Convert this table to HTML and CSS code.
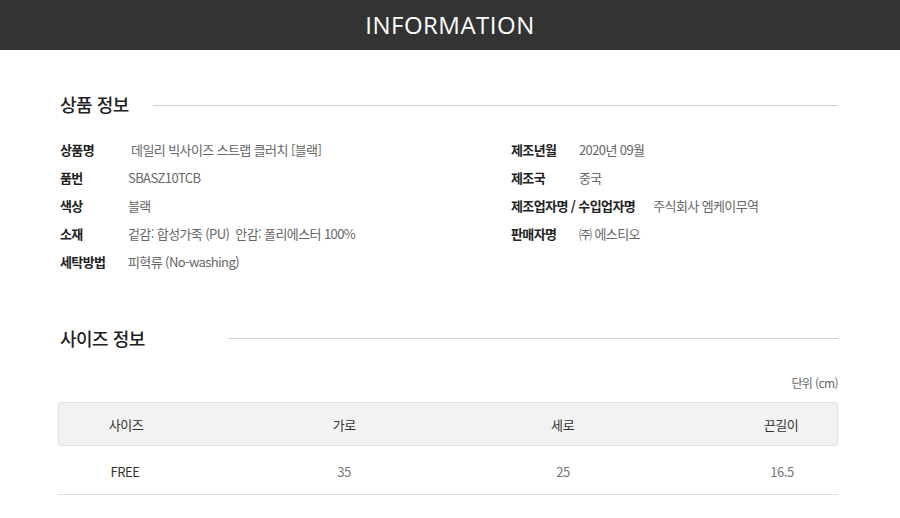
FILE: index.html
```html
<!DOCTYPE html>
<html lang="ko">
<head>
<meta charset="utf-8">
<title>INFORMATION</title>
<link rel="stylesheet" href="styles.css">
</head>
<body>
<header class="top-bar"><h1 class="top-title">INFORMATION</h1></header>
<main class="content">
  <section class="section">
    <div class="section-head">
      <h2 class="section-title">상품 정보</h2>
      <span class="section-line line-product"></span>
    </div>
    <div class="info-grid">
      <dl class="info-col">
        <div class="info-row"><dt class="info-label">상품명</dt><dd class="info-value">&nbsp;데일리 빅사이즈 스트랩 클러치 [블랙]</dd></div>
        <div class="info-row"><dt class="info-label">품번</dt><dd class="info-value">SBASZ10TCB</dd></div>
        <div class="info-row"><dt class="info-label">색상</dt><dd class="info-value">블랙</dd></div>
        <div class="info-row"><dt class="info-label">소재</dt><dd class="info-value">겉감: 합성가죽 (PU) &nbsp;안감: 폴리에스터 100%</dd></div>
        <div class="info-row"><dt class="info-label">세탁방법</dt><dd class="info-value">피혁류 (No-washing)</dd></div>
      </dl>
      <dl class="info-col">
        <div class="info-row"><dt class="info-label">제조년월</dt><dd class="info-value">2020년 09월</dd></div>
        <div class="info-row"><dt class="info-label">제조국</dt><dd class="info-value">중국</dd></div>
        <div class="info-row"><dt class="info-label">제조업자명 / 수입업자명</dt><dd class="info-value">주식회사 엠케이무역</dd></div>
        <div class="info-row"><dt class="info-label">판매자명</dt><dd class="info-value">㈜ 에스티오</dd></div>
      </dl>
    </div>
  </section>
  <section class="section section-size">
    <div class="section-head">
      <h2 class="section-title">사이즈 정보</h2>
      <span class="section-line line-size"></span>
    </div>
    <p class="unit">단위 (cm)</p>
    <div class="size-table">
      <div class="size-row size-head">
        <span class="size-cell">사이즈</span>
        <span class="size-cell">가로</span>
        <span class="size-cell">세로</span>
        <span class="size-cell">끈길이</span>
      </div>
      <div class="size-row size-body">
        <span class="size-cell cell-strong">FREE</span>
        <span class="size-cell">35</span>
        <span class="size-cell">25</span>
        <span class="size-cell">16.5</span>
      </div>
    </div>
  </section>
</main>
</body>
</html>
```
FILE: styles.css
```css
* { box-sizing: border-box; }
html, body { margin: 0; padding: 0; background: #fff; }
body {
  font-family: "Noto Sans CJK KR", "Noto Sans", sans-serif;
  color: #333;
  width: 900px;
  height: 518px;
  overflow: hidden;
}
.top-bar {
  height: 50px;
  background: #333333;
  display: flex;
  align-items: center;
  justify-content: center;
}
.top-title {
  margin: 0;
  color: #fff;
  font-family: "Open Sans", sans-serif;
  font-weight: 400;
  font-size: 24px;
  line-height: 50px;
  letter-spacing: 0.5px;
}
.content {
  padding: 0 62px 0 58px;
}
.section { padding-top: 42px; }
.section-size { padding-top: 51px; }
.section-head {
  display: flex;
  align-items: center;
  padding-left: 2px;
  height: 24px;
}
.section-title {
  margin: 0;
  font-size: 18px;
  font-weight: 500;
  line-height: 24px;
  color: #222;
  letter-spacing: -0.5px;
}
.section-line {
  flex: 1;
  height: 1px;
  background: #cfcfcf;
  margin-top: 3px;
}
.line-product { margin-left: 24px; }
.line-size { margin-left: 83px; margin-top: 0; }
.info-grid {
  display: grid;
  grid-template-columns: 451px 1fr;
  padding-left: 2px;
  margin-top: 19px;
}
.info-col { margin: 0; }
.info-row {
  display: flex;
  height: 28px;
  align-items: center;
  font-size: 13px;
  letter-spacing: -0.6px;
}
.info-label {
  min-width: 50px;
  margin-right: 18px;
  font-weight: 700;
  color: #222;
}
.info-value {
  margin: 0;
  color: #666;
}
.unit {
  margin: 23px 0 9px;
  text-align: right;
  font-size: 12px;
  line-height: 20px;
  color: #666;
  letter-spacing: -0.6px;
}
.size-table {
  font-size: 13px;
  letter-spacing: -0.4px;
}
.size-row {
  display: flex;
  justify-content: space-between;
  padding: 0 6px 0 17px;
  align-items: center;
}
.size-head {
  height: 44px;
  background: #f2f2f2;
  border: 1px solid #e4e4e4;
  color: #333;
}
.size-body {
  height: 49px;
  border-bottom: 1px solid #e0e0e0;
  color: #777;
  padding-top: 3px;
}
.size-cell {
  width: 100px;
  text-align: center;
}
.cell-strong { color: #333; }
```
